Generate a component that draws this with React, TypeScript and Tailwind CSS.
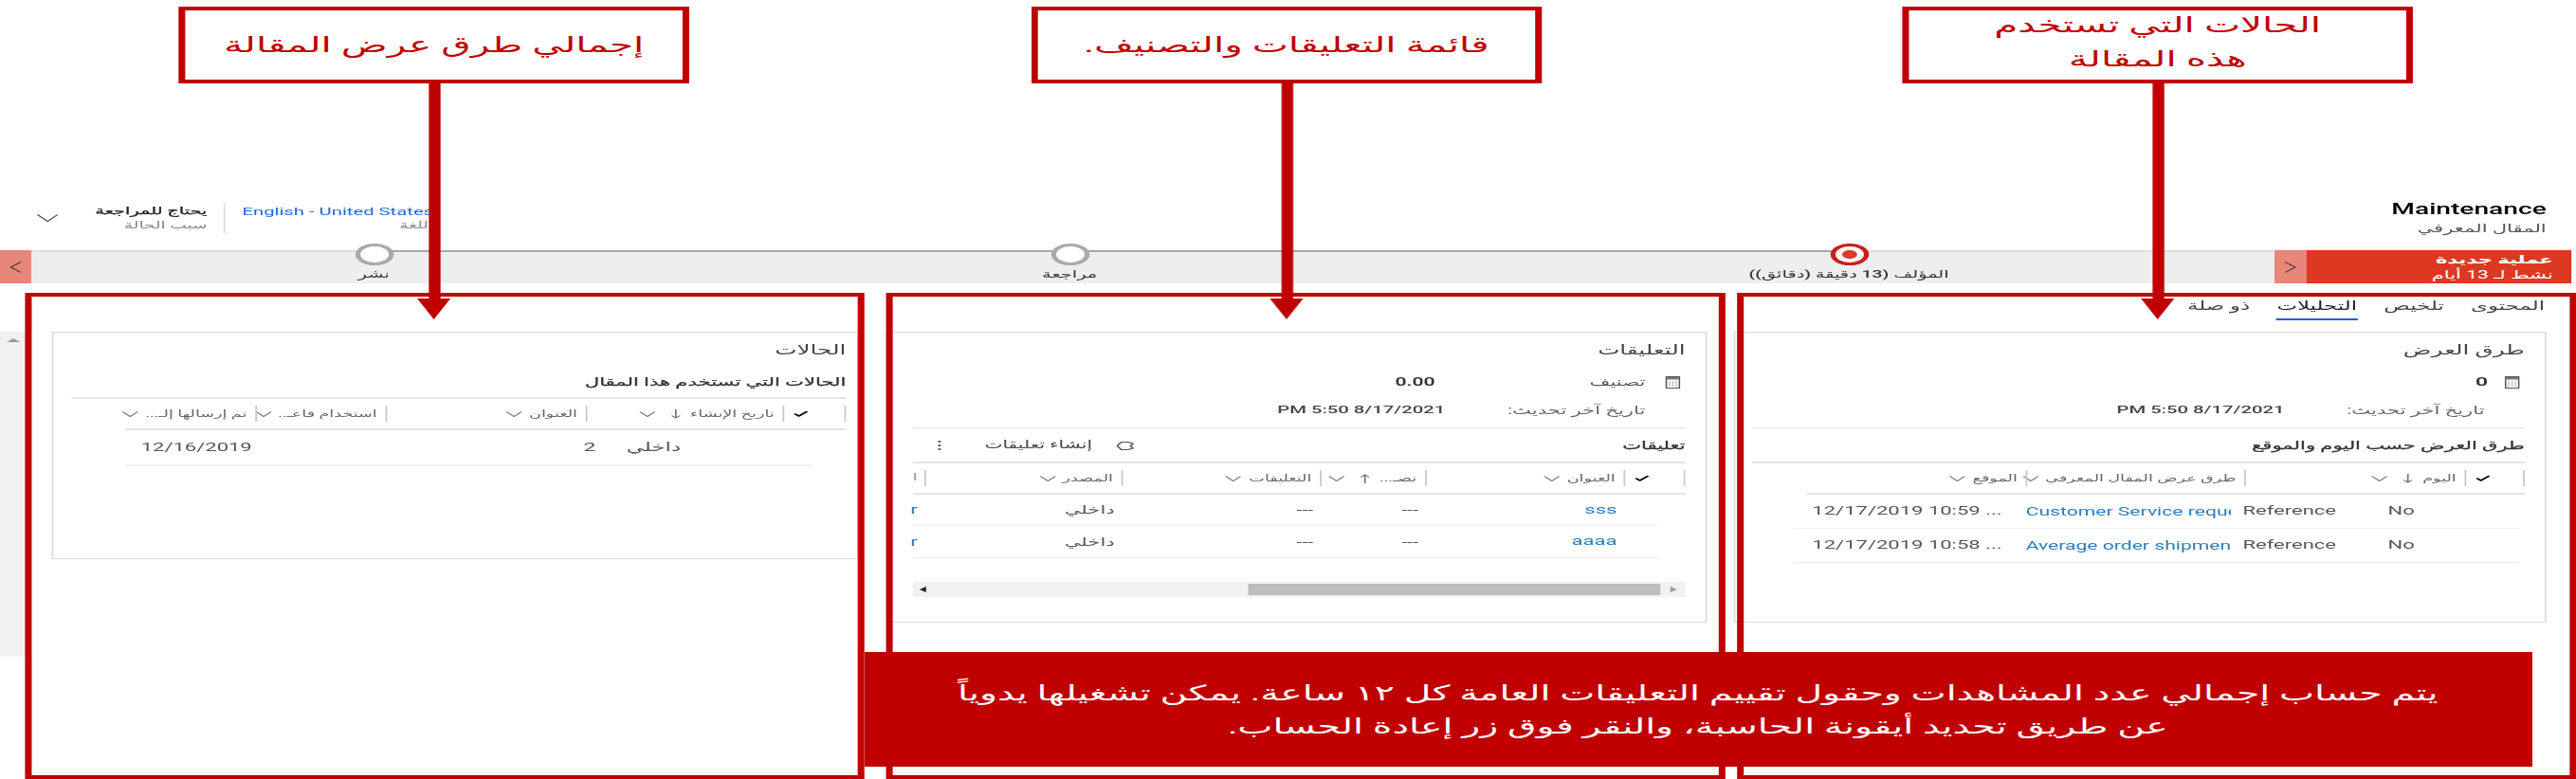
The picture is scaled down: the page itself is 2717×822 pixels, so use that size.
import { ReactNode } from 'react';
import { Check } from 'lucide-react';

const Chevron = ({ className = '' }: { className?: string }) => (
  <svg width="10" height="6" viewBox="0 0 10 6" fill="none" stroke="#777" strokeWidth="1" className={`shrink-0 ${className}`}>
    <path d="M0.5 0.5 5 5.5 9.5 0.5" />
  </svg>
);

const SortArrow = ({ up = false }: { up?: boolean }) => (
  <svg width="6" height="10" viewBox="0 0 6 10" fill="none" stroke="#777" strokeWidth="1" className="ms-[6px] shrink-0">
    {up ? <path d="M3 10V1M0.5 3.5 3 1l2.5 2.5" /> : <path d="M3 0v9M0.5 6.5 3 9l2.5-2.5" />}
  </svg>
);

const CalcIcon = () => (
  <svg width="9" height="13" viewBox="0 0 9 13" fill="none" className="shrink-0">
    <rect x="0.5" y="0.5" width="8" height="12" stroke="#555" />
    <rect x="1" y="1" width="7" height="2.5" fill="#777" />
    <path d="M2 6h1M4 6h1M6 6h1M2 8h1M4 8h1M6 8h1M2 10h1M4 10h1M6 10h1" stroke="#999" />
  </svg>
);

type HeadProps = { width: string; label: string; sort?: 'up' | 'down' };

const HeadCell = ({ width, label, sort }: HeadProps) => (
  <div className={`flex h-[17px] shrink-0 items-center border-s border-[#c8c8c8] ps-[5px] text-[10px] whitespace-nowrap text-[#666] ${width}`}>
    <span>{label}</span>
    {sort && <SortArrow up={sort === 'up'} />}
    <Chevron className={sort ? 'ms-[9px]' : 'ms-[4px]'} />
  </div>
);

const CheckCell = ({ width }: { width: string }) => (
  <div className={`flex h-[17px] shrink-0 items-center justify-end border-s border-[#c8c8c8] pe-[5px] ${width}`}>
    <Check size={10} strokeWidth={3.5} className="text-black" />
  </div>
);

const Card = ({ className, children }: { className: string; children: ReactNode }) => (
  <section className={`overflow-hidden border border-[#dcdcdc] bg-white pt-[8px] ${className}`}>{children}</section>
);

const Title = ({ children }: { children: ReactNode }) => (
  <h2 className="h-[20px] text-[14px] leading-[20px] text-[#444]">{children}</h2>
);

const SectionTitle = ({ className = '', children }: { className?: string; children: ReactNode }) => (
  <h3 className={`h-[20px] text-[12px] leading-[20px] text-[#333] [-webkit-text-stroke:0.25px_#333] ${className}`}>{children}</h3>
);

const UpdatedRow = () => (
  <div className="mt-[10px] flex h-[20px] items-center text-[12px]">
    <span className="w-[120px] shrink-0 text-[#666]">تاريخ آخر تحديث:</span>
    <span dir="ltr" className="text-[11.5px] font-medium whitespace-nowrap text-[#444]">PM 5:50 8/17/2021</span>
  </div>
);

const ViewsCard = () => (
  <Card className="h-[307px]">
    <div className="pe-[10px] ps-[12px]">
      <Title>طرق العرض</Title>
      <div className="mt-[14px] flex h-[20px] items-center gap-[10px] ps-[3px]">
        <CalcIcon />
        <span className="text-[13px] font-semibold text-[#333]">0</span>
      </div>
      <div className="ps-[24px]">
        <UpdatedRow />
      </div>
      <div className="mt-[8px] border-t border-[#dedede]" />
      <SectionTitle className="mt-[8px]">طرق العرض حسب اليوم والموقع</SectionTitle>
      <div className="mt-[7px] border-t-2 border-[#e4e4e4]" />
      <div className="me-[33px] flex h-[33px] items-center border-b-2 border-[#e4e4e4]">
        <CheckCell width="w-[35px]" />
        <HeadCell width="w-[132px]" label="اليوم" sort="down" />
        <HeadCell width="w-[131px]" label="طرق عرض المقال المعرفي" />
        <HeadCell width="w-[100px]" label="الموقع" />
      </div>
      {[
        { name: 'Customer Service reque', when: '12/17/2019 10:59 ...' },
        { name: 'Average order shipmen', when: '12/17/2019 10:58 ...' },
      ].map((row) => (
        <div key={row.when} className="ms-[3px] me-[25px] flex h-[36px] items-center border-b border-[#eeeeee] text-[12.5px] text-[#555]">
          <div className="w-[110px] shrink-0 ps-[63px]">No</div>
          <div className="w-[63px] shrink-0">Reference</div>
          <div dir="ltr" className="w-[123px] shrink-0 overflow-hidden text-[12px] whitespace-nowrap text-[#2f7cb8]">{row.name}</div>
          <div dir="ltr" className="w-[128px] shrink-0 whitespace-nowrap">{row.when}</div>
        </div>
      ))}
    </div>
  </Card>
);

const CommentsCard = () => (
  <Card className="h-[307px]">
    <div className="pe-[15px] ps-[12px]">
      <Title>التعليقات</Title>
      <div className="mt-[14px] flex h-[20px] items-center text-[12px]">
        <div className="flex w-[150px] shrink-0 items-center gap-[12px] ps-[3px]">
          <CalcIcon />
          <span className="text-[#555]">تصنيف</span>
        </div>
        <span className="text-[12px] font-semibold text-[#333]">0.00</span>
      </div>
      <div className="ps-[24px]">
        <UpdatedRow />
      </div>
      <div className="mt-[8px] border-t border-[#dedede]" />
      <div className="mt-[8px] flex h-[20px] items-center justify-between">
        <SectionTitle>تعليقات</SectionTitle>
        <div className="flex items-center text-[11.5px] text-[#444]">
          <svg width="11" height="11" viewBox="0 0 11 11" fill="none" stroke="#555" strokeWidth="1.1">
            <path d="M3 1.5h4l3 1.5-1.5 2.5 1.5 2.5-3 1.5H3L.5 5.5z" />
          </svg>
          <span className="ms-[14px]">إنشاء تعليقات</span>
          <span className="ms-[26px] flex flex-col gap-[2px] pe-[15px]">
            <i className="size-[2px] rounded-full bg-[#555]" />
            <i className="size-[2px] rounded-full bg-[#555]" />
            <i className="size-[2px] rounded-full bg-[#555]" />
          </span>
        </div>
      </div>
      <div className="mt-[7px] border-t-2 border-[#e4e4e4]" />
      <div className="flex h-[33px] items-center overflow-hidden border-b-2 border-[#e4e4e4]">
        <CheckCell width="w-[36px]" />
        <HeadCell width="w-[119px]" label="العنوان" />
        <HeadCell width="w-[63px]" label="تصـ..." sort="up" />
        <HeadCell width="w-[119px]" label="التعليقات" />
        <HeadCell width="w-[118px]" label="المصدر" />
        <div className="h-[17px] border-s border-[#c8c8c8] ps-[4px] text-[11px] text-[#999]">ا</div>
      </div>
      {['sss', 'aaaa'].map((title, i) => (
        <div key={title} className={`ms-[16px] flex items-center border-b border-[#f0f0f0] text-[12px] text-[#555] ${i === 0 ? 'h-[33px]' : 'h-[34px]'}`}>
          <div className="w-[139px] shrink-0 ps-[25px] text-[12.5px] text-[#2f7cb8]">{title}</div>
          <div className="w-[63px] shrink-0 ps-[5px]">---</div>
          <div className="w-[119px] shrink-0 ps-[5px]">---</div>
          <div className="w-[119px] shrink-0 ps-[5px]">داخلي</div>
          <div className="ps-[4px] text-[13px] text-[#2f7cb8]">r</div>
        </div>
      ))}
      <div className="mt-[25px] flex h-[16px] items-center bg-[#f1f1f1]">
        <span className="ms-[5px] size-0 shrink-0 border-y-[3px] border-l-[4px] border-y-transparent border-l-[#999]" />
        <div className="ms-[6px] h-[12px] w-[247px] shrink-0 bg-[#bdbdbd]" />
        <span className="ms-auto me-[4px] size-0 shrink-0 border-y-[3px] border-r-[4px] border-y-transparent border-r-[#222]" />
      </div>
    </div>
  </Card>
);

const CasesCard = () => (
  <Card className="h-[240px]">
    <div className="pe-[11px] ps-[7px]">
      <Title>الحالات</Title>
      <SectionTitle className="mt-[14px]">الحالات التي تستخدم هذا المقال</SectionTitle>
      <div className="mt-[6px] border-t-2 border-[#e4e4e4]" />
      <div className="me-[32px] flex h-[33px] items-center border-b-2 border-[#e4e4e4]">
        <CheckCell width="w-[37px]" />
        <HeadCell width="w-[118px]" label="تاريخ الإنشاء" sort="down" />
        <HeadCell width="w-[120px]" label="العنوان" />
        <HeadCell width="w-[78px]" label="استخدام قاعـ.." />
        <HeadCell width="w-[79px]" label="تم إرسالها إلـ..." />
      </div>
      <div className="ms-[20px] me-[32px] flex h-[38px] items-center border-b-2 border-[#f0f0f0] text-[13px] text-[#555]">
        <div className="w-[117px] shrink-0 ps-[79px]">داخلي</div>
        <div className="w-[210px] shrink-0 ps-[13px]">2</div>
        <div className="ps-[9px] text-[12.5px]">12/16/2019</div>
      </div>
    </div>
  </Card>
);

const Callout = ({ className, children }: { className: string; children: ReactNode }) => (
  <div className={`absolute top-[7px] flex h-[81px] w-[306px] flex-col items-center justify-center border-4 border-[#c00000] bg-white text-[23px] leading-[36px] text-[#c00000] ${className}`}>
    {children}
  </div>
);

const Pointer = ({ className }: { className: string }) => (
  <div className={`absolute top-[88px] flex w-[20px] flex-col items-center ${className}`}>
    <div className="h-[227px] w-[7px] bg-[#c00000]" />
    <div className="size-0 border-x-[10px] border-t-[22px] border-x-transparent border-t-[#c00000]" />
  </div>
);

const Frame = ({ className }: { className: string }) => (
  <div className={`absolute top-[309px] bottom-0 border-4 border-[#c00000] ${className}`} />
);

const Annotations = () => (
  <>
    <Frame className="left-[15px] w-[503px]" />
    <Frame className="left-[531px] w-[503px]" />
    <Frame className="left-[1041px] w-[503px]" />
    <Pointer className="left-[250px]" />
    <Pointer className="left-[761px]" />
    <Pointer className="left-[1283px]" />
    <Callout className="left-[107px]">إجمالي طرق عرض المقالة</Callout>
    <Callout className="left-[618px]">قائمة التعليقات والتصنيف.</Callout>
    <Callout className="left-[1140px] pb-[5px]">
      <span>الحالات التي تستخدم</span>
      <span>هذه المقالة</span>
    </Callout>
    <div className="absolute top-[688px] left-[518px] flex h-[121px] w-[999px] flex-col items-center justify-center bg-[#c00000] text-[22.4px] leading-[35px] text-white">
      <p>يتم حساب إجمالي عدد المشاهدات وحقول تقييم التعليقات العامة كل ١٢ ساعة. يمكن تشغيلها يدوياً</p>
      <p>عن طريق تحديد أيقونة الحاسبة، والنقر فوق زر إعادة الحساب.</p>
    </div>
  </>
);

const Stage = ({ label, offset, active = false }: { label: string; offset: string; active?: boolean }) => (
  <div className={`relative flex w-[200px] flex-col items-center ${offset}`}>
    {active ? (
      <div className="-mt-[9px] flex size-[23px] items-center justify-center rounded-full border-[3px] border-[#c8201a] bg-white">
        <div className="size-[9px] rounded-full bg-[#da3b2a]" />
      </div>
    ) : (
      <div className="-mt-[9px] size-[23px] rounded-full border-[3px] border-[#aaaaaa] bg-white" />
    )}
    <span className={`mt-[1px] text-[11px] leading-[18px] whitespace-nowrap text-[#333] ${active ? 'font-medium' : ''}`}>{label}</span>
  </div>
);

export default function App() {
  return (
    <div className="relative h-[822px] w-[2717px] overflow-hidden bg-white">
      <div
        dir="rtl"
        className="relative h-[822px] w-[1544px] origin-top-left scale-x-[1.76] font-['Roboto','DejaVu_Sans',sans-serif]"
      >
        <header className="flex h-[264px] items-start justify-between pe-[22px] ps-[18px] pt-[211px]">
          <div>
            <div className="text-[16px] leading-[20px] font-medium text-black">Maintenance</div>
            <div className="mt-[1px] text-[12px] leading-[18px] text-[#555]">المقال المعرفي</div>
          </div>
          <div className="flex items-center pt-[3px]">
            <div>
              <div className="text-[11.5px] leading-[16px] text-[#2266e3]" dir="ltr">English - United States</div>
              <div className="text-[10.5px] leading-[14px] text-[#888]">اللغة</div>
            </div>
            <div className="mx-[10px] h-[32px] border-s border-[#dddddd]" />
            <div>
              <div className="text-[11px] leading-[16px] text-[#222] [-webkit-text-stroke:0.25px_#222]">يحتاج للمراجعة</div>
              <div className="text-[10.5px] leading-[14px] text-[#888]">سبب الحالة</div>
            </div>
            <svg width="13" height="8" viewBox="0 0 13 8" fill="none" stroke="#444" className="ms-[22px]">
              <path d="M0.5 0.5 6.5 7.5 12.5 0.5" />
            </svg>
          </div>
        </header>

        <div className="flex h-[35px]">
          <div className="w-[3px] bg-white" />
          <div className="w-[159px] bg-[#dc3822] pe-[4px] ps-[11px] pt-[2px] text-white">
            <div className="text-[12px] leading-[17px] font-semibold">عملية جديدة</div>
            <div className="text-[12px] leading-[15px]">نشط لـ 13 أيام</div>
          </div>
          <div className="flex w-[19px] items-center justify-center bg-[#e8867a] text-[#333]">
            <svg width="7" height="12" viewBox="0 0 7 12" fill="none" stroke="#333"><path d="M0.5 0.5 6.5 6 0.5 11.5" /></svg>
          </div>
          <div className="relative flex flex-1 border-t-2 border-[#dddddd] bg-[#eeeeee]">
            <div className="absolute -top-[2px] right-[255px] left-[205px] h-[2px] bg-[#a8a8a8]" />
            <Stage label="المؤلف  (13 دقيقة (دقائق))" offset="ms-[155px]" active />
            <Stage label="مراجعة" offset="ms-[267px]" />
            <Stage label="نشر" offset="ms-[217px]" />
          </div>
          <div className="flex w-[19px] items-center justify-center bg-[#e8867a]">
            <svg width="7" height="12" viewBox="0 0 7 12" fill="none" stroke="#333"><path d="M6.5 0.5 0.5 6 6.5 11.5" /></svg>
          </div>
        </div>

        <nav className="flex h-[51px] gap-4 ps-[19px] pt-[14px] text-[13px] leading-[20px] text-[#444]">
          <span>المحتوى</span>
          <span>تلخيص</span>
          <span className="h-[25px] border-b-2 border-[#1a5bdc] text-[#222]">التحليلات</span>
          <span>ذو صلة</span>
        </nav>

        <main className="flex items-start ps-[18px]">
          <div className="grid grid-cols-[487px_492px_484px] items-start gap-4">
            <ViewsCard />
            <CommentsCard />
            <CasesCard />
          </div>
          <div className="ms-[16px] flex h-[343px] w-[15px] justify-center bg-[#f1f1f1] pt-[7px]">
            <span className="size-0 border-x-[4px] border-b-[4px] border-x-transparent border-b-[#999]" />
          </div>
        </main>

        <Annotations />
      </div>
    </div>
  );
}
